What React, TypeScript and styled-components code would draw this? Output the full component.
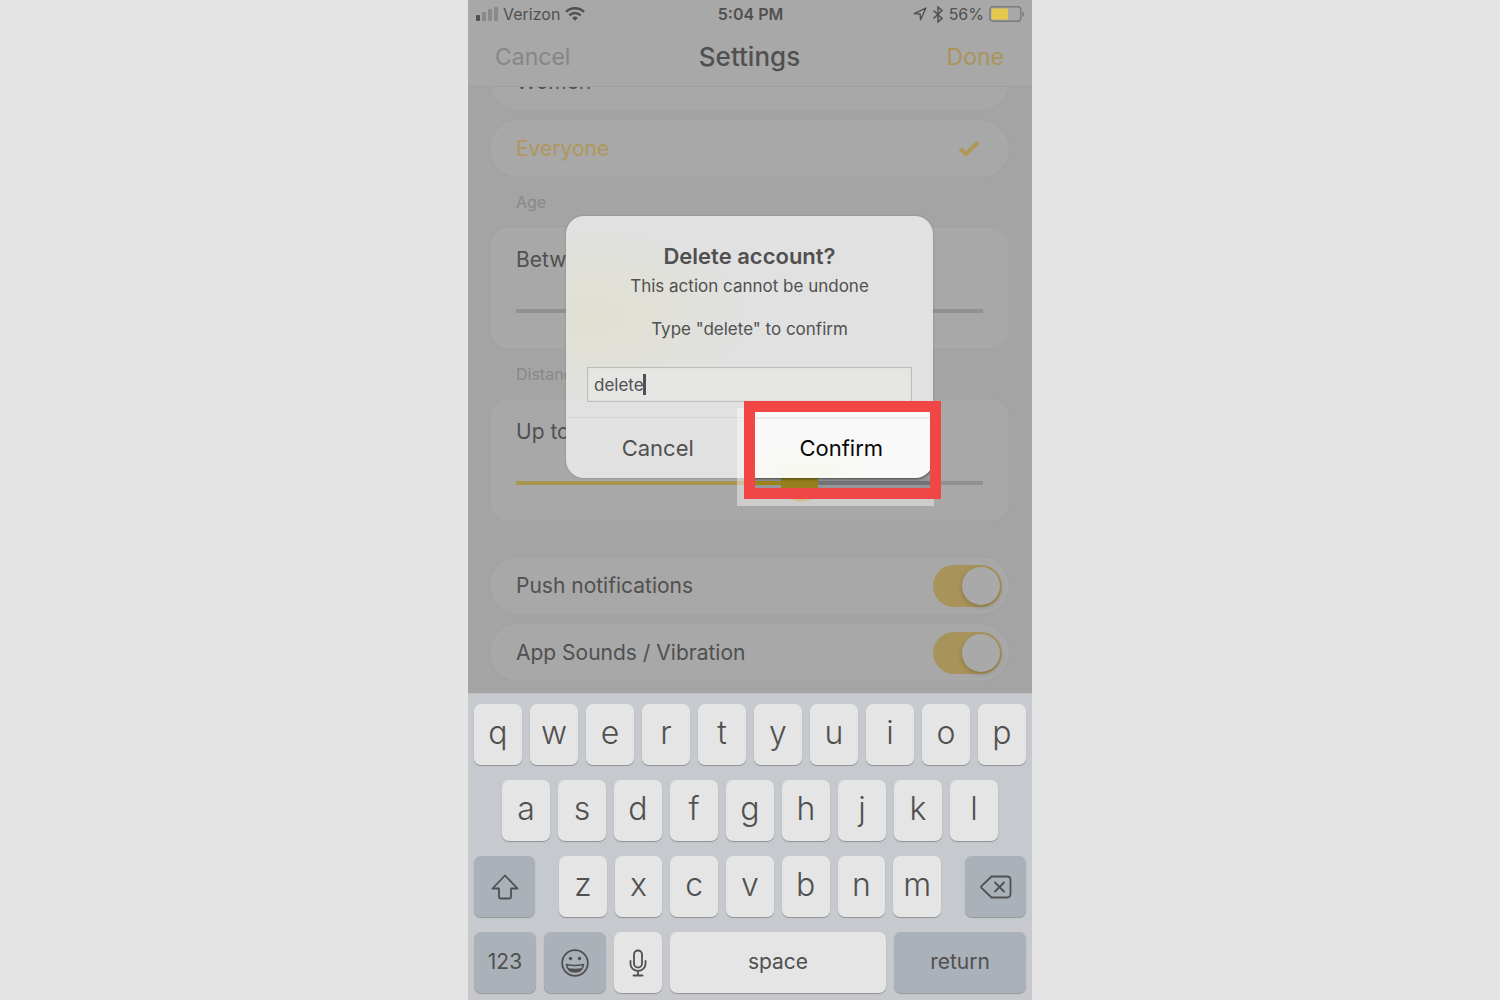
import React, { useState } from "react";
import styled, { createGlobalStyle } from "styled-components";

const GlobalStyle = createGlobalStyle`
  *, *::before, *::after { box-sizing: border-box; }
  body { margin: 0; background: #e4e4e4; }
  button, input { font: inherit; color: inherit; margin: 0; padding: 0; border: 0; background: none; }
  h1, h2, p { margin: 0; font-weight: inherit; }
`;

const Page = styled.div`
  display: flex;
  justify-content: center;
  height: 100vh;
  background: #e4e4e4;
  font-family: Inter, Roboto, "Liberation Sans", sans-serif;
  color: #505050;
`;

const Phone = styled.div`
  position: relative;
  display: flex;
  flex-direction: column;
  width: 100%;
  max-width: 564px;
  background: #a4a4a4;
  overflow: hidden;
`;

const Header = styled.header`
  background: #a8a8a8;
  border-bottom: 1px solid #a0a0a0;
`;

const StatusBar = styled.div`
  display: grid;
  grid-template-columns: 1fr auto 1fr;
  align-items: center;
  height: 28px;
  padding: 0 7px 0 8px;
  font-size: 16px;
`;

const StatusGroup = styled.div<{ $end?: boolean }>`
  display: flex;
  align-items: center;
  gap: 5px;
  justify-content: ${(p) => (p.$end ? "flex-end" : "flex-start")};
`;

const Clock = styled.span`
  font-weight: 600;
`;

const NavBar = styled.nav`
  display: grid;
  grid-template-columns: 1fr auto 1fr;
  align-items: center;
  height: 58px;
  padding: 0 28px 0 27px;
`;

const NavButton = styled.button<{ $accent?: boolean }>`
  justify-self: ${(p) => (p.$accent ? "end" : "start")};
  font-size: 23px;
  line-height: 30px;
  color: ${(p) => (p.$accent ? "#ab945a" : "#868686")};
`;

const NavTitle = styled.h1`
  font-size: 26px;
  line-height: 30px;
  font-weight: 500;
`;

const Settings = styled.main`
  flex: 1;
  min-height: 0;
  display: flex;
  flex-direction: column;
  justify-content: flex-end;
  padding: 0 22px 11px 21px;
  overflow: hidden;
  font-size: 21px;
`;

const Row = styled.label<{ $selected?: boolean }>`
  flex: none;
  display: flex;
  align-items: center;
  justify-content: space-between;
  height: 59px;
  margin-top: 8px;
  padding: 0 7px 0 26px;
  border: 1px solid #a1a1a1;
  border-radius: 30px;
  background: #a8a8a8;
  color: ${(p) => (p.$selected ? "#b0975a" : "inherit")};
`;

const RowCheck = styled.svg`
  margin-right: 21px;
`;

const SectionLabel = styled.h2`
  flex: none;
  height: 48px;
  padding: 12px 26px 0 27px;
  font-size: 16px;
  line-height: 24px;
  color: #888;
`;

const RangeCard = styled.section`
  flex: none;
  display: flex;
  flex-direction: column;
  justify-content: space-between;
  height: 124px;
  padding: 19px 26px 19px 26px;
  border: 1px solid #a1a1a1;
  border-radius: 20px;
  background: #a8a8a8;
`;

const RangeLabel = styled.label`
  line-height: 28px;
`;

const Range = styled.input<{ $track: string }>`
  appearance: none;
  display: block;
  width: 100%;
  height: 38px;
  border-radius: 2px;
  background: ${(p) => p.$track} center / 100% 4px no-repeat;
  &::-webkit-slider-thumb {
    appearance: none;
    width: 38px;
    height: 38px;
    border-radius: 50%;
    background: #a8954f;
  }
`;

const Spacer = styled.div`
  flex: none;
  height: 26px;
`;

const Toggle = styled.input`
  appearance: none;
  display: flex;
  align-items: center;
  width: 69px;
  height: 42px;
  padding: 2px;
  border-radius: 21px;
  background: #9a9a9a;
  &::after {
    content: "";
    width: 38px;
    height: 38px;
    border-radius: 50%;
    background: #a9a9a9;
    box-shadow: 0 2px 4px rgba(80, 70, 20, 0.35);
  }
  &:checked {
    justify-content: flex-end;
    background: #a8935a;
  }
`;

const Keyboard = styled.section`
  flex: none;
  display: flex;
  flex-direction: column;
  gap: 15px;
  padding: 10px 6px 7px;
  border-top: 1px solid #bdbfc2;
  background: linear-gradient(#c6cace, #c6cace 60%, #c7c8cc);
`;

const KeyRow = styled.div<{ $inset?: boolean }>`
  display: flex;
  gap: 8px;
  padding: 0 ${(p) => (p.$inset ? 28 : 0)}px;
`;

const KeyGroup = styled.div`
  flex: 1;
  display: flex;
  gap: 8px;
  margin: 0 16px;
`;

const Key = styled.button<{ $width?: number; $dark?: boolean; $word?: boolean }>`
  flex: ${(p) => (p.$width ? `0 0 ${p.$width}px` : "1 1 0")};
  display: flex;
  align-items: center;
  justify-content: center;
  min-width: 0;
  height: 61px;
  padding-bottom: ${(p) => (p.$word ? 2 : 4)}px;
  border-radius: 7px;
  background: ${(p) => (p.$dark ? "#abb1b9" : "#e5e5e5")};
  box-shadow: 0 1px 1px ${(p) => (p.$dark ? "#93979c" : "#909294")};
  font-size: ${(p) => (p.$word ? 21 : 32)}px;
  font-weight: ${(p) => (p.$word ? 400 : 350)};
`;

const KeyIcon = styled.svg`
  margin-top: 5px;
`;

const Backdrop = styled.div`
  position: absolute;
  inset: 0 1px 306px 0;
  display: flex;
  align-items: center;
  justify-content: center;
`;

const Dialog = styled.form`
  width: 367px;
  padding-top: 24px;
  border-radius: 18px;
  background: radial-gradient(ellipse 160px 90px at 25px 100px, #e1e0d2, rgba(225, 225, 220, 0)), #e1e1e1;
  box-shadow: 0 0 2px rgba(90, 90, 90, 0.5);
  text-align: center;
`;

const DialogTitle = styled.h2`
  margin-bottom: 1px;
  font-size: 22px;
  line-height: 32px;
  font-weight: 600;
`;

const DialogText = styled.p`
  margin-bottom: 17px;
  font-size: 17px;
  line-height: 26px;
`;

const ConfirmField = styled.label`
  display: block;
  padding: 0 21px 15px;
  font-size: 17px;
  line-height: 26px;
`;

const InputBox = styled.span`
  position: relative;
  display: block;
  margin-top: 25px;
`;

const TextInput = styled.input`
  display: block;
  width: 100%;
  height: 35px;
  padding: 0 6px;
  border: 1px solid #bcbcb8;
  background: #e5e5e4;
  box-shadow: inset 0 0 1px #bcbcb8;
`;

const Caret = styled.span`
  position: absolute;
  left: 56px;
  top: 7px;
  width: 3px;
  height: 21px;
  background: #505050;
`;

const DialogActions = styled.div`
  display: grid;
  grid-template-columns: 1fr 1fr;
  height: 61px;
  border-top: 1px solid #d4d4d4;
`;

const ActionCell = styled.div`
  position: relative;
  display: grid;
`;

const ActionButton = styled.button<{ $strong?: boolean }>`
  position: relative;
  font-size: 22px;
  color: ${(p) => (p.$strong ? "#080808" : "#505050")};
`;

const Halo = styled.div`
  position: absolute;
  inset: -10px -1px -28px -13px;
  background: rgba(255, 255, 255, 0.42);
`;

const Spotlight = styled.div`
  position: absolute;
  inset: -17px -8px -21px -6px;
  border: 11px solid #f04646;
  background: #969696;
  overflow: hidden;
`;

const SpotPanel = styled.div`
  position: absolute;
  inset: 0 -3px 10px -20px;
  padding-top: 5px;
  border-radius: 0 0 18px 18px;
  background: radial-gradient(ellipse 80px 40px at 70px 66px, #f8f8ef, #f9f9f9);
  box-shadow: 0 1px 3px rgba(0, 0, 0, 0.55);
  &::after {
    content: "";
    display: block;
    height: 2px;
    background: #ebebeb;
  }
`;

const SpotTrack = styled.div`
  position: absolute;
  inset: auto 0 3px;
  height: 4px;
  background: linear-gradient(90deg, #9c831b 30px, #737377 30px);
`;

const SpotThumb = styled.div`
  position: absolute;
  left: 26px;
  bottom: 0;
  width: 37px;
  height: 12px;
  background: #95801e;
`;

const topKeys = "qwertyuiop".split("");
const middleKeys = "asdfghjkl".split("");
const bottomKeys = "zxcvbnm".split("");

function SignalIcon() {
  return (
    <svg width="22" height="14" viewBox="0 0 22 14" aria-hidden="true">
      <rect x="0" y="8" width="4" height="6" rx="1" fill="#505050" />
      <rect x="6" y="5" width="4" height="9" rx="1" fill="#898989" />
      <rect x="12" y="2" width="4" height="12" rx="1" fill="#898989" />
      <rect x="18" y="0" width="4" height="14" rx="1" fill="#898989" />
    </svg>
  );
}

function WifiIcon() {
  return (
    <svg width="20" height="14" viewBox="0 0 20 14" fill="none" stroke="#505050" aria-hidden="true">
      <path d="M1 4.9a13 13 0 0 1 18 0" strokeWidth="2.4" />
      <path d="M4.3 8.3a8.2 8.2 0 0 1 11.4 0" strokeWidth="2.3" />
      <path d="M10 13.8 7.1 10.9a4.2 4.2 0 0 1 5.8 0z" fill="#505050" stroke="none" />
    </svg>
  );
}

function LocationIcon() {
  return (
    <svg width="14" height="14" viewBox="0 0 14 14" aria-hidden="true">
      <path d="M12.8 1.2 1.3 6.6l5.8.4.5 5.8z" fill="none" stroke="#505050" strokeWidth="1.4" strokeLinejoin="round" />
    </svg>
  );
}

function BluetoothIcon() {
  return (
    <svg width="12" height="17" viewBox="0 0 12 17" aria-hidden="true">
      <path d="m1.5 4.5 8.500 8L6 16V1l4 3.500-8.500 8" fill="none" stroke="#505050" strokeWidth="1.5" />
    </svg>
  );
}

function BatteryIcon() {
  return (
    <svg width="36" height="16" viewBox="0 0 36 16" aria-hidden="true">
      <rect x="0.8" y="0.8" width="31" height="14.4" rx="3" fill="none" stroke="#7b7b7b" strokeWidth="1.4" />
      <rect x="2.5" y="2.5" width="16.5" height="11" rx="1" fill="#e6c84c" />
      <path d="M33.4 5.2v5.6q1.8-.8 1.8-2.8t-1.8-2.8z" fill="#7b7b7b" />
    </svg>
  );
}

function LetterKeys({ letters }: { letters: string[] }) {
  return (
    <>
      {letters.map((letter) => (
        <Key key={letter} type="button">{letter}</Key>
      ))}
    </>
  );
}

export default function App() {
  const [text, setText] = useState("delete");
  const [age, setAge] = useState(35);
  const [distance, setDistance] = useState(62);

  return (
    <>
      <GlobalStyle />
      <Page>
        <Phone>
          <Header>
            <StatusBar>
              <StatusGroup>
                <SignalIcon />
                <span>Verizon</span>
                <WifiIcon />
              </StatusGroup>
              <Clock>5:04 PM</Clock>
              <StatusGroup $end>
                <LocationIcon />
                <BluetoothIcon />
                <span>56%</span>
                <BatteryIcon />
              </StatusGroup>
            </StatusBar>
            <NavBar>
              <NavButton type="button">Cancel</NavButton>
              <NavTitle>Settings</NavTitle>
              <NavButton type="button" $accent>Done</NavButton>
            </NavBar>
          </Header>

          <Settings>
            <Row as="div">Women</Row>
            <Row as="div" $selected>
              Everyone
              <RowCheck width="24" height="18" viewBox="0 0 24 18" aria-hidden="true">
                <path d="m3 8.500 6 5.500L21 2.500" fill="none" stroke="#b0975a" strokeWidth="4" />
              </RowCheck>
            </Row>
            <SectionLabel>Age</SectionLabel>
            <RangeCard>
              <RangeLabel htmlFor="age">Between</RangeLabel>
              <Range
                id="age"
                type="range"
                value={age}
                onChange={(e) => setAge(Number(e.target.value))}
                $track="linear-gradient(#919192, #919192)"
              />
            </RangeCard>
            <SectionLabel>Distance</SectionLabel>
            <RangeCard>
              <RangeLabel htmlFor="distance">Up to</RangeLabel>
              <Range
                id="distance"
                type="range"
                value={distance}
                onChange={(e) => setDistance(Number(e.target.value))}
                $track="linear-gradient(90deg, #a8954f 60%, #919192 60%)"
              />
            </RangeCard>
            <Spacer />
            <Row>
              Push notifications
              <Toggle type="checkbox" defaultChecked />
            </Row>
            <Row>
              App Sounds / Vibration
              <Toggle type="checkbox" defaultChecked />
            </Row>
          </Settings>

          <Keyboard aria-label="Keyboard">
            <KeyRow>
              <LetterKeys letters={topKeys} />
            </KeyRow>
            <KeyRow $inset>
              <LetterKeys letters={middleKeys} />
            </KeyRow>
            <KeyRow>
              <Key type="button" $width={61} $dark aria-label="Shift">
                <KeyIcon width="28" height="26" viewBox="0 0 28 26">
                  <path d="M14 1.500 1.500 14.500H8v8.500q0 1.500 1.500 1.500h9q1.500 0 1.500-1.500v-8.500h6.500z" fill="none" stroke="#505050" strokeWidth="1.8" strokeLinejoin="round" />
                </KeyIcon>
              </Key>
              <KeyGroup>
                <LetterKeys letters={bottomKeys} />
              </KeyGroup>
              <Key type="button" $width={61} $dark aria-label="Backspace">
                <KeyIcon width="32" height="24" viewBox="0 0 32 24" fill="none" stroke="#505050" strokeWidth="1.8" strokeLinecap="round" strokeLinejoin="round">
                  <path d="M11.500 1.500H27q3.500 0 3.500 3.500v14q0 3.500-3.500 3.500H11.500L1.500 12.800q-.8-.8 0-1.600z" />
                  <path d="m15 7.500 9 9m0-9-9 9" />
                </KeyIcon>
              </Key>
            </KeyRow>
            <KeyRow>
              <Key type="button" $width={62} $dark $word>123</Key>
              <Key type="button" $width={62} $dark aria-label="Emoji">
                <KeyIcon width="28" height="28" viewBox="0 0 28 28">
                  <circle cx="14" cy="14" r="12.800" fill="none" stroke="#505050" strokeWidth="1.800" />
                  <circle cx="9.500" cy="9.500" r="1.700" fill="#505050" />
                  <circle cx="18.500" cy="9.500" r="1.700" fill="#505050" />
                  <path d="M5.500 15.500q8.500 2 17 0-1 7.500-8.500 7.500t-8.500-7.500z" fill="none" stroke="#505050" strokeWidth="1.600" strokeLinejoin="round" />
                  <path d="M7 19q7 1.500 14 0-2 4-7 4t-7-4z" fill="#505050" />
                </KeyIcon>
              </Key>
              <Key type="button" $width={48} aria-label="Dictation">
                <KeyIcon width="18" height="28" viewBox="0 0 18 28" fill="none" stroke="#505050" strokeWidth="1.800" strokeLinecap="round">
                  <rect x="5" y="1.500" width="8" height="17" rx="4" />
                  <path d="M1.500 12v3a7.500 7 0 0 0 15 0v-3M9 22v4M4.500 26.500h9" />
                </KeyIcon>
              </Key>
              <Key type="button" $word>space</Key>
              <Key type="button" $width={132} $dark $word>return</Key>
            </KeyRow>
          </Keyboard>

          <Backdrop>
            <Dialog role="alertdialog" aria-labelledby="dialog-title" onSubmit={(e) => e.preventDefault()}>
              <DialogTitle id="dialog-title">Delete account?</DialogTitle>
              <DialogText>This action cannot be undone</DialogText>
              <ConfirmField>
                Type "delete" to confirm
                <InputBox>
                  <TextInput type="text" value={text} onChange={(e) => setText(e.target.value)} />
                  <Caret aria-hidden="true" />
                </InputBox>
              </ConfirmField>
              <DialogActions>
                <ActionCell>
                  <ActionButton type="button">Cancel</ActionButton>
                </ActionCell>
                <ActionCell>
                  <Halo />
                  <Spotlight>
                    <SpotTrack />
                    <SpotThumb />
                    <SpotPanel />
                  </Spotlight>
                  <ActionButton type="submit" $strong>Confirm</ActionButton>
                </ActionCell>
              </DialogActions>
            </Dialog>
          </Backdrop>
        </Phone>
      </Page>
    </>
  );
}
